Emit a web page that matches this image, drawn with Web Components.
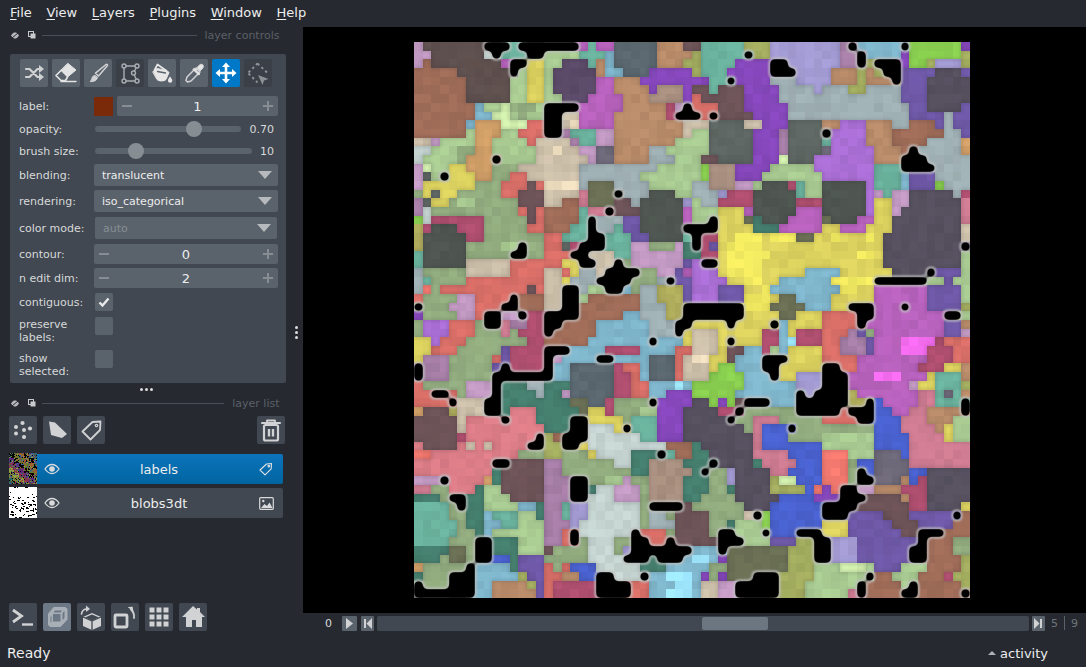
<!DOCTYPE html>
<html><head><meta charset="utf-8"><title>napari</title>
<style>html,body{margin:0;height:100%;background:#262930;overflow:hidden}</style></head>
<body><nv-app></nv-app>
<script>
const FONT='"DejaVu Sans",sans-serif';
const S=(b)=>`<svg width="28" height="28" viewBox="0 0 28 28" fill="none" stroke="#d1d2d4" stroke-width="2" stroke-linecap="round" stroke-linejoin="round">${b}</svg>`;
const ICONS={
shuffle:S(`<path d="M6 10h3.5l8 8H20M6 18h3.5l8-8H20" stroke-width="2.2"/><path d="M19 6l5 4-5 4zM19 14l5 4-5 4z" fill="#d1d2d4" stroke="none"/>`),
erase:S(`<path d="M16 4.500L24 11l-8.500 7L9 11.500z" fill="#e4e4e4" stroke="#e4e4e4" stroke-width="1"/><path d="M9 11.500L4 16.500 9 21.500h4.500l2-3.500" stroke="#e4e4e4" stroke-width="1.700"/><path d="M9 22.500h15" stroke="#e4e4e4" stroke-width="1.300"/>`),
brush:S(`<path d="M22 5.500c1-.7 2 .3 1.300 1.300L14.500 17l-3-2.800z" stroke-width="1.500"/><path d="M10.500 16.500c-2.500.5-2.500 3-3 4.500-.2.800-1 1.200-1.500 1.500 3 .5 7-.5 7.500-4z" fill="#d1d2d4" stroke-width="1"/>`),
poly:S(`<path d="M8 7h13l-3.500 7 3.500 8H8z" stroke="#a8adb2" stroke-width="1.400"/><g fill="#3f444c" stroke="#a8adb2" stroke-width="1.400"><circle cx="8" cy="7" r="2"/><circle cx="21" cy="7" r="2"/><circle cx="17.500" cy="14" r="2"/><circle cx="21" cy="22" r="2"/><circle cx="8" cy="22" r="2"/></g>`),
fill:S(`<path d="M5 12.500l4-3 10 2 2 2-3 7c-2 2-7 2-9 0z" fill="#e6e6e6" stroke="#e6e6e6" stroke-width="1"/><path d="M6.500 11L9.500 5.500l8.500 6" stroke="#e6e6e6" stroke-width="1.700"/><path d="M9.500 12.500l8 1.500" stroke="#5a626c" stroke-width="1.300"/><path d="M22 17.500c1.500 2 2.300 3 2.300 4a2.200 2.200 0 0 1-4.400 0c0-1 .7-2 2.100-4z" fill="#e6e6e6" stroke="none"/>`),
pick:S(`<path d="M16 9l4 4-9 9-3.500 1-1.500-1.500 1-3.500z" stroke-width="1.500"/><path d="M14.500 9.500l5.500 5.500-1.500 1L13 10.500zM17 8.500l2.500-2.500c1-1 3-1 3.500 0s.5 2.500-.5 3.500L20 12z" fill="#e4e4e4" stroke="#e4e4e4" stroke-width=".8"/>`),
move:S(`<path d="M14 6v16M6 14h16" stroke="#fff" stroke-width="2.600" stroke-linecap="butt"/><path d="M14 3.500l4 4.500h-8zM14 24.500l4-4.500h-8zM3.500 14L8 10v8zM24.500 14L20 10v8z" fill="#fff" stroke="none"/>`),
select:S(`<path d="M13.500 4.500L23 13.500M4.500 13.500l9-9M4.500 14.500l9 9" stroke="#8d9196" stroke-dasharray="2.500 2.800" stroke-width="1.900" stroke-linecap="butt"/><path d="M14 16l10.500 4-4.500 1.500-1.500 4.500z" fill="#8d9196" stroke="none"/>`),
points:S(`<g fill="#d1d2d4" stroke="none"><circle cx="13.500" cy="7" r="2.100"/><circle cx="7" cy="11" r="2"/><circle cx="21" cy="12.500" r="2.100"/><circle cx="15" cy="14" r="2"/><circle cx="7" cy="17.500" r="2"/><circle cx="15" cy="21" r="2.100"/></g>`),
shapes:S(`<path d="M6 5.500l6 1L24 18l-5 4-11-3z" fill="#d1d2d4" stroke="none"/>`),
labels:S(`<path d="M5.500 15.500L15.500 6l8-.5-.5 8.500-9.500 9.500z" stroke-width="1.800"/><circle cx="19.500" cy="9.500" r="1.200" stroke-width="1.200"/>`),
trash:S(`<path d="M5 7h18" stroke-width="2.200"/><path d="M10 6.500V4.500h8v2" stroke-width="1.800" stroke-linecap="butt"/><rect x="7" y="9" width="14" height="15.500" rx="1.500" stroke-width="2.200"/><path d="M12 13v7.500M16 13v7.500" stroke-width="2.400" stroke-linecap="butt"/>`),
term:S(`<path d="M4 7l8.500 6L4 19" stroke-width="2.800" stroke-linecap="butt" stroke-linejoin="miter"/><path d="M13 21.500h11" stroke-width="2.400" stroke-linecap="butt"/>`),
ndisp:S(`<path d="M11 4.500h11.500l1.500 1.500v10.500l-6.500 7H7l-1.500-1.500V11z" fill="#a9afb6" stroke="#a9afb6" stroke-width="1"/><path d="M10 11h7.500v7.500H10zM12 7.500h7l-1.500 2h-7zM19.500 10l2-2v7l-2 2zM8.500 12.500v6l-1 1.500v-6z" fill="#6c7885" stroke="none"/>`),
rollcube:S(`<path d="M15 10l9 4v9l-9 4-9-4v-9z" fill="#d1d2d4" stroke="none"/><path d="M6 14l9 4 9-4M15 18v9" stroke="#414851" stroke-width="1.300"/><path d="M15 11.500l7 3-7 3-7-3z" fill="#414851" stroke="none"/><path d="M4.500 11c.5-3 2.500-5 5.500-5" stroke-width="1.600"/><path d="M9 2.500l4 3.500-4 3z" fill="#d1d2d4" stroke="none"/>`),
transpose:S(`<rect x="4" y="12" width="12" height="12" rx="1" stroke-width="2.800"/><path d="M23 15c.5-3.500-.5-6-3-8.500" stroke-width="1.800"/><path d="M17 3.500l5 .5 0 5z" fill="#d1d2d4" stroke="none" transform="rotate(-8 20 6)"/>`),
grid:S(`<g fill="#d1d2d4" stroke="none"><rect x="4.500" y="4.500" width="5" height="5"/><rect x="11.500" y="4.500" width="5" height="5"/><rect x="18.500" y="4.500" width="5" height="5"/><rect x="4.500" y="11.500" width="5" height="5"/><rect x="11.500" y="11.500" width="5" height="5"/><rect x="18.500" y="11.500" width="5" height="5"/><rect x="4.500" y="18.500" width="5" height="5"/><rect x="11.500" y="18.500" width="5" height="5"/><rect x="18.500" y="18.500" width="5" height="5"/></g>`),
home:S(`<path d="M14 3L3 14h4v10h6v-7h4v7h6V14h3l-5-5V5h-3v1.500z" fill="#d1d2d4" stroke="none"/>`)
};
const EYE=`<svg width="16" height="12" viewBox="0 0 16 12" fill="none"><path d="M1 6c2-3 4.500-4.500 7-4.500S13 3 15 6c-2 3-4.500 4.500-7 4.500S3 9 1 6z" stroke="#d9dadb" stroke-width="1.300"/><circle cx="8" cy="6" r="2.800" fill="#d9dadb"/></svg>`;
const TAG=`<svg width="14" height="14" viewBox="0 0 14 14" fill="none" stroke="#e0e1e2" stroke-width="1.100" stroke-linejoin="round"><path d="M1 8L7.500 2l5-.5-.3 5.300L6 12.800z"/><circle cx="9.800" cy="4.200" r=".8"/></svg>`;
const IMG=`<svg width="15" height="13" viewBox="0 0 15 13" fill="none"><rect x=".7" y=".7" width="13.600" height="11.600" rx="1" stroke="#d9dadb" stroke-width="1.200"/><path d="M2 11l3.500-4 2.500 2 2.500-3.500 3 5.500z" fill="#d9dadb"/><circle cx="4.300" cy="4" r="1.200" fill="#d9dadb"/></svg>`;
function def(name,css,html,extra){customElements.define(name,class extends HTMLElement{constructor(){super();const r=this.attachShadow({mode:'open'});r.innerHTML=`<style>${css}</style>${typeof html==='function'?html(this):html}`;}connectedCallback(){if(extra&&!this._d){this._d=1;extra(this);}}});}

def('nv-btn',`:host{display:block;width:28px;height:28px;border-radius:2px;background:var(--bg,#414851);flex:none}:host([ctl]){background:#5a626c}:host([dim]){background:#3b4048}:host([active]){background:#0078c8}:host([on]){background:#6c7885}svg{display:block}`,'',h=>{h.shadowRoot.innerHTML+=ICONS[h.getAttribute('icon')]||'';});
def('nv-menu',`:host{display:flex;height:27px;align-items:center;padding:0 0 2px 10px;box-sizing:border-box;font:13px ${FONT};color:#eceded;background:#262930}span{margin-right:14.6px}u{text-underline-offset:2px}`,`<span><u>F</u>ile</span><span><u>V</u>iew</span><span><u>L</u>ayers</span><span><u>P</u>lugins</span><span><u>W</u>indow</span><span><u>H</u>elp</span>`);
def('nv-title',`:host{display:flex;align-items:center;height:16px;font:11px ${FONT};color:#5b6068;padding:0 10.500px 0 11px}i{flex:1;height:1px;background:#4a4f57;margin:0 8px 0 6px}svg{display:block;margin-right:9px}svg+svg{margin-right:0}`,
`<svg width="8" height="7" viewBox="0 0 8 7"><path d="M0 3.500C1.500 1 3 .5 4 .5s2.500.5 4 3C6.500 6 5 6.500 4 6.500S1.500 6 0 3.500z" fill="#b5b7ba"/><path d="M1 6L7 1" stroke="#262930"/></svg><svg width="8" height="8" viewBox="0 0 8 8" fill="none" stroke="#c8cacc"><rect x="2.500" y="2.500" width="5" height="5" fill="#c8cacc" stroke="none"/><rect x=".5" y=".5" width="5" height="5"/></svg><i></i><slot></slot>`);
def('nv-row',`:host{display:flex;align-items:center;height:var(--h,20px);font:11px/13px ${FONT};color:#d7d9da}.l{width:75px;flex:none}.c{flex:1;min-width:0;display:flex;align-items:center;gap:4px}:host([top]){align-items:flex-start}:host([top]) .l{margin-top:2px}`,`<div class="l"><slot name="label"></slot></div><div class="c"><slot></slot></div>`);
def('nv-stepper',`:host{display:flex;flex:1;align-items:center;height:20px;background:#5a626c;border-radius:2px;font:13px ${FONT};color:#eceded;justify-content:space-between;padding:0 5px}b{width:10px;height:10px;position:relative;display:block}b:before{content:"";position:absolute;left:0;right:0;top:4px;height:2px;background:#868e93}b.p:after{content:"";position:absolute;top:0;bottom:0;left:4px;width:2px;background:#868e93}`,`<b></b><slot></slot><b class="p"></b>`);
def('nv-slider',`:host{display:flex;flex:1;align-items:center;font:11px ${FONT};color:#d7d9da}.t{position:relative;flex:1;height:6px;margin-left:1px;background:#5a626c;border-radius:3px}.t i{position:absolute;top:-5px;width:16px;height:16px;margin-left:-8px;border-radius:50%;background:#868e93}.v{flex:none;text-align:right;padding-right:4px;box-sizing:border-box}`,h=>`<div class="t"><i style="left:${h.getAttribute('pos')}%"></i></div><div class="v" style="width:${h.getAttribute('vw')}px"><slot></slot></div>`);
def('nv-combo',`:host{display:flex;flex:1;align-items:center;height:22px;background:#5a626c;border-radius:2px;font:11px ${FONT};color:#eceded;padding:0 6px 0 8px;justify-content:space-between}:host([off]){margin:0 1px;color:#868e93}i{border-left:7px solid transparent;border-right:7px solid transparent;border-top:8px solid #b7babc}`,`<slot></slot><i></i>`);
def('nv-check',`:host{display:block;width:18px;height:18px;margin-left:1px;background:#5a626c;border-radius:2px}svg{display:block}`,h=>h.hasAttribute('checked')?`<svg width="18" height="18" viewBox="0 0 18 18" fill="none"><path d="M4.500 9.500l3 3 6-7" stroke="#e8e9ea" stroke-width="2.400"/></svg>`:'');
def('nv-controls',`:host{display:flex;flex-direction:column;margin:11px 4px 0 10px;background:#414851;border-radius:2px;padding:5px 8px 5px 9px;height:329px;box-sizing:border-box}.b{display:flex;gap:4px;margin-left:1px}nv-row{flex:none}.sw{width:19px;height:19px;background:#7a2a08;flex:none}`,
`<div class="b"><nv-btn ctl icon="shuffle"></nv-btn><nv-btn ctl icon="erase"></nv-btn><nv-btn ctl icon="brush"></nv-btn><nv-btn dim icon="poly"></nv-btn><nv-btn ctl icon="fill"></nv-btn><nv-btn ctl icon="pick"></nv-btn><nv-btn active icon="move"></nv-btn><nv-btn dim icon="select"></nv-btn></div>
<nv-row style="margin-top:9px"><span slot="label">label:</span><div class="sw"></div><nv-stepper>1</nv-stepper></nv-row>
<nv-row style="margin-top:3px"><span slot="label">opacity:</span><nv-slider pos="67.800" vw="37">0.70</nv-slider></nv-row>
<nv-row style="margin-top:2px"><span slot="label">brush size:</span><nv-slider pos="26" vw="26">10</nv-slider></nv-row>
<nv-row style="margin-top:3px;--h:22px"><span slot="label">blending:</span><nv-combo>translucent</nv-combo></nv-row>
<nv-row style="margin-top:4px;--h:22px"><span slot="label">rendering:</span><nv-combo>iso_categorical</nv-combo></nv-row>
<nv-row style="margin-top:5px;--h:22px"><span slot="label">color mode:</span><nv-combo off>auto</nv-combo></nv-row>
<nv-row style="margin-top:5px"><span slot="label">contour:</span><nv-stepper>0</nv-stepper></nv-row>
<nv-row style="margin-top:4px"><span slot="label">n edit dim:</span><nv-stepper>2</nv-stepper></nv-row>
<nv-row style="margin-top:4px"><span slot="label">contiguous:</span><nv-check checked></nv-check></nv-row>
<nv-row top style="margin-top:5px;--h:28px"><span slot="label" style="position:relative;top:-1px">preserve<br>labels:</span><nv-check></nv-check></nv-row>
<nv-row top style="margin-top:5px;--h:28px"><span slot="label">show<br>selected:</span><nv-check></nv-check></nv-row>`);
def('nv-layer',`:host{display:flex;align-items:center;height:30px;margin:0 7px 0 9px;background:#414851;border-radius:2px;font:13px ${FONT};color:#eceded;position:relative}:host([sel]){background:linear-gradient(#0d74bd,#00659f)}canvas{display:block;flex:none;width:28px;height:31px;margin-bottom:1px}.e{width:30px;text-align:center;flex:none;line-height:0}.n{flex:1;text-align:center;padding-right:8px}.t{width:16px;flex:none;margin-right:8px;line-height:0}`,h=>`<canvas width="28" height="31"></canvas><div class="e">${EYE}</div><div class="n"><slot></slot></div><div class="t">${h.hasAttribute('sel')?TAG:IMG}</div>`,h=>{
 const c=h.shadowRoot.querySelector('canvas').getContext('2d');let s=7;const rnd=()=>(s=(s*16807)%2147483647)/2147483647;
 if(h.hasAttribute('sel')){const p=['#000','#000','#7a8a3a','#5b2a7a','#a0602a','#2a6a5a','#8a3050','#6a7a30','#3a5a9a','#90a040'];
  for(let y=0;y<31;y++)for(let x=0;x<28;x++){const b=(Math.floor(x/5)*7+Math.floor(y/5)*13)%10;c.fillStyle=rnd()<.55?p[b]:p[Math.floor(rnd()*10)];c.fillRect(x,y,1,1);}}
 else{c.fillStyle='#fff';c.fillRect(0,0,28,31);c.fillStyle='#000';for(let i=0;i<120;i++){const y=rnd()*31;if(y<10&&rnd()<.7)continue;c.fillRect(Math.floor(rnd()*28),Math.floor(y),1+Math.floor(rnd()*2),1);}}
});
def('nv-layers',`:host{display:flex;flex-direction:column}.b{display:flex;gap:6px;margin:5px 5px 10px 9px}.s{flex:1}`,`<div class="b"><nv-btn icon="points"></nv-btn><nv-btn icon="shapes"></nv-btn><nv-btn icon="labels"></nv-btn><div class="s"></div><nv-btn icon="trash"></nv-btn></div><nv-layer sel>labels</nv-layer><nv-layer style="margin-top:4px">blobs3dt</nv-layer>`);
def('nv-side',`:host{display:flex;min-height:0;background:#262930}.col{width:290px;display:flex;flex-direction:column}.v{flex:1;display:flex;flex-direction:column;align-items:center;justify-content:center;gap:2px;margin-right:1px}.v i,.h i{width:3px;height:3px;border-radius:50%;background:#dcdddd;display:block}.h{display:flex;justify-content:center;gap:2px;align-items:center;height:12px;margin-left:3px}.f{margin-top:auto;display:flex;gap:6px;padding:0 0 6px 9px}`,
`<div class="col"><nv-title>layer controls</nv-title><nv-controls></nv-controls><div class="h"><i></i><i></i><i></i></div><nv-title>layer list</nv-title><nv-layers></nv-layers><div class="f"><nv-btn icon="term"></nv-btn><nv-btn on icon="ndisp"></nv-btn><nv-btn icon="rollcube"></nv-btn><nv-btn icon="transpose"></nv-btn><nv-btn icon="grid"></nv-btn><nv-btn icon="home"></nv-btn></div></div><div class="v"><i></i><i></i><i></i></div>`);
const PAL={K:'#000000',D:'#5e504e',B:'#a06d59',T:'#6bb39e',t:'#46806f',G:'#a9cb92',g:'#92ac7f',h:'#d5f3b0',Y:'#dcd25f',y:'#f2ea60',P:'#5b4a68',M:'#b862bd',m:'#f56cf0',O:'#b98c6a',o:'#d2a068',V:'#8748bd',v:'#ab6fd6',W:'#cdc0aa',w:'#efdfc0',R:'#d96f68',r:'#f47a70',N:'#4f5651',n:'#5d6662',A:'#9fb0b4',a:'#5b6870',C:'#7fb6cc',c:'#9fe8ff',E:'#c59cc6',e:'#a77fa7',L:'#a39bd3',l:'#6f59a8',U:'#4a62d0',S:'#b04f70',s:'#cf7c92',p:'#dc7d87',Q:'#56505f',F:'#8ad050',f:'#b0ad5c',i:'#c5d4d0',I:'#6b7055',J:'#a4ae60',d:'#6d5458',X:'#a88f7f',z:'#6f6a7a'};
const GL=["EDDDDDDDKKKTKKKKKKKMTMMaaaaaOOOd","EEDDDDDDiKTTTKKGGGGTTTCaaaaaOOOO","EBDDDDDDDDMKKYYGGPPPTOCaaaaaOOOJ","BBBBBDDDDDDKGYYGPPPPPOCCaaaVVVVV","BBBBBBDDDDDGGYYGPPPPPMMOOOVVVVVV","BBBBBBDDDDDGGYYGPPPPPMMOOOOVXXXV","BBBBBBDDDDDGGYYGGPPPMMMMOOOXXXXV","BBBBBBBCGGhgggGKKKKMMMMMOOOOOSEK","BBBBBBBCChhGgGGKKWWMMMMOOOOOOSKK","BBBBBBCooohhhRRKKWwMMMMOOOOOOOOW","BBBBBBGoooGGRRRKKeTTTEEOOOOOOOOW","WWEGGGGooGGGGRWWWWeTTEEOOOOOOOGG","iiGGGggooGGGGGWWwWWEEzzOOOOAAGGG","iGGGGgoooKGGGGWWWWWWEzzOOOOAAAGG","EhGGYYooogggWWWWWWWAAAAAAAAAGGGG","EnGKYYYooggRRWWWWWWAAAAAAAGGGGGG","EYYYYYYgggRRRdRwwwwAIIIAAAAGGGGG","gYnYYgggggRRdddWWWWsIIIKAAANNNGG","enYYgGGgggggdddWWBBsIIIddANNNNNL","eiggggggggggRdRBBBBTssKdddNNNNNM","FiSSSSSSgggggdRBBBBTKAAAllNNNNNM","fSNNNSSSgggggRRBBBTTKAATllNNNNNK","fNNNNNSSgggggggRRTTTKKTTTllNNNNT","fNNNNNggggGGKggRRnSKKKTTTEEgggEt","TNNNNNgggggKKggRRRKKWWWTTEEEEEEt","TNNNNNWWWWWRRRRRRYYKKWWKgEEEEEEl","AgggggWWWWWRRRRWWRYAAWKKKKggEElM","ATggggRRRRRRRRRWWYAAAKKKKgggAKll","ArgRRRRRRRRRRdRWWKKAGGKKCgAAfffl","RggggEERRRRKBBBWWKKGBBBBBBAAfffl","KgggEEERRRKKBBBWWKKBBBBBBBAAAffK","VggggEERKKEEKSSKKKKBBBBBCCAAAffK",
"gvvvRRRgKKseeSSKKBBBBCCCCCCAAAKK","gvvvRRRgggsgSSSKBBBBBCCCCCCAAAKY","YYvRRRgggggggSSBBBBBCCCCCCCKCCCY","YYRRRggggglSSSSKKKCCCCSSSSCCCCRR","YeeegggggRlSSSSKECCCCKKCCCCaaaRW","KeeegggggllKSSSSKCCaaaaaSRRCaaaRW".replace('ll','l'),"KeeegggggKKKKKKKCCaaaaaSSRCaaaRW","RgggggEEEKtttAAtttaaaaaSSRRCCCcC","RRKKRgEEEKttttAttEaaaaaSSRRCCVVV","RRRRKWWWKKttttttttIIaaSggggKVVVV","odddfWWWKKtppptttttIYYSgggGGVVVQ","dddddWppppKpppttttKKYYYYgTTTVVVQ","dddddWppppppppptttKKiiiYKTTTVVVQ","dddddSppppppppKJBKKKiiiiiiTTVVVQ","pddddpWpWppppKKJJKKYiiiiiiiiiBBB","rrppppppppppgggJJgggYiiiitttKTBB","pppppppppKKddddeeggggggiittXXXXt","ppppppppptdddddeeggggggggttXXXXX","EEEKppppotdddddeeeKKggGGEggXXXXt","ssggppptGGdddddeeeKKtiiEEEgXXXXt","tttgKKttGGGddddeeeKKiiiEEEgXXXXt","TTTTgKttGGGGCCteeTLLiiiiiigKKKKd","TTTTggttCTTTGGteeTLLiiiiiigAAgdd","TTTTTgttCCTTGGGeeeLiiiiiiigAAAdd","TTTTTggtCGGGGGGeeRKiiiiiiKRRRgdd","TTTTgggKKtttGGGeeRKgiiiggKKRRKdd","ttttIIgKKtttGGGdggggiiigLKKKKKKK","tttgIIgKKUUtlllgggggiiiiKKKtKKKC","ogggggKCCCCtlllRgRUUUiiiiitttCCC","tgggKKKCCCCCJllRROOUUKKiiiKCCccc","KgggKKKCCOOOOJlRSSSSSKKKKRRCCCcc","KKKKKKKCCOOOOOlRSSSSSKKKKRRCCccc"];
const GR=["dTTTTTJJJLLLLLLLLeKCCCCCKFFFFFFV","JTTTTTKJJLLLLLLLLeeKCCCCVFFFFFFJ","JTTTTVVVVKKLLLLLLeeKJKKKVFFJLLLJ","JTTTVVVVVKKKLLLLOOOJOJKKllllQQQl","VVTTKVVVVAAALLLLOOOJOOOKlllQQQQQ","ddTdddVVVVAAAALAAAJJAAAAlllQQQQQ","RdddddVVVVAAAAAAAAAAAAAAlllQQQQQ","RRRdddVVVVVAAAAAAAAAAAAAAllQQQQl","KRKddddVVVVAAAAAAAAAAAAAAllllAll","WWnnnnWWVVVnnnnOOvvvOOOAABBBlAll","GGnnnnnVVVennnnKvvvvOOOBBBBBBAAl","GGnnnnnVVVennnnTvvvvOOOBBBBAAAAo","GGnnnnnVVVennnnzvvvvvOOOBKAAAAAo","GddnnnnVVVhnnnvvvvvvvOOOKKKAAAAA","GFXXXVVVVGGGGGvvvvvvvTTTKKKKAAAA","GFXXXVVVGGGGGGGvvvvvvTTTClllAAAA","AAXXXEEGNNNSTGGNNNNNvTTTClllFAAA","AAALSSSNNNNNTGGNNNNNvETEEQQQQQAS","GAASSSSNNNNNSSSNNNNNvYYEEQQQQQQs","GGGYYYMNNNNNMMMNNNNNvYYEQQQQQQQs","GGKYYYItNNNMMMMINNNMMYYQQQQQQQQs","KKKYYYYtttMMMMMYYMMMYYYQQQQQQQQW","KSSYYyyyYyyyIIYYyYYYyYQQQQQQQQQW","KSlYyyyyYYYYYYYYYYYYYYQQQQQQQQQK","tSSYyyyyyYYYYYYYYYYyyYQQQQQQQQQG","vKKYyyyyYYYYYYYYYYYYYYQQQQQQQQQG","vvvYyyyyYYYYYCCCCYYYYYYQQQQKlllG","vvvvYYyyYYCCCCCCyyyyyKKKKKKGGlGG","vvvlllYYyCCCCCCCCyyYYMMMMMMllllG","vvvlllyyyYIICCCCYYYYYMMMMMMllllG","KKKKKKyyyIIIICCCYYKKKMMMKMMllllJ","KKKKKKYYYYIIYYYRRRRKKMMMMMMMMKKG",
"YYYYKYYYYKCYYYYRRRRKMMMMMMMMMllO","WWWYYYYYSSCYSSSRRRelgMMMMMMMMllE","WWWYKYYYSSCcSSSRReeelMMMmmmmSRRR","WWWYddCCSGCYYYYRReeelMMMmmmSSSRR","wwYYdCCCKKKYYYYRRRRMMMMMMMMSSSRR","WWYFFCCCKKYYYYYKKRRMMMMMMMSSSYYO","WWFFFFCCCKYYLLLKKKMMMmmmMMMYTTTO","FFFFFFCCCCCCLLLKKKMMMMMMMEYYTTTJ","FFFFFCCCCCCCKLKKKKfMMMMMMMssTzTO","QQFVFdKKKCCCKKKKKKffKUMMMMssTTTK","QQQSSKggggggKKKKKRKKKUUMMssOOOOK","QQQQKggsssgggggRRRRKKUUUsssOOOGG","QQQQQQgsUUUKgggggggggUUUssssOYGG","QQQQQQQsUUUggggGGGGGGUUUUssssYGG","tQQQQQQsUUUUUUUGGGGGGUUUUsssssss","ttQQQQQssssUUUUrrrGGGzzzUsssssss","ttKQQQQtssssUUUrrrgUUzzzzsssssss","tKggLQQQQssUUUUrrrgKUzzzzUUQQQQQ","ttggLQQQQJhhUUUrrrgKKzzzOUSQQQQQ","ttggtQQQQJJJJUrVrKKEEOOOSSSQQQQQ","tggggQQQQQUUUUVVVKKKddddOSSQQQQQ","ggggggQQQUUUUUUKKKKddddddSSQQQQY","ddggggWKFUUUUUUKKKlllldddlllllKB","ddggtGGGFUUUUUUYYYllllldddllllBB","ddgKKGGGKUUUKKKYYYllllllddKKKBBB","dddKKKGGGlllJJKKLLLlllllllKBBBgg","CCCKIIIIIIIJJJKKLLLllllllKKBBBgg","ccCVIIIIIIIJJJKKLLLllllllKKBBBBJ","CCggIIIIIIIJJJGGGhhhGlllGGGBBBBJ","CVgVIIIKKKJJJJGGGGGGKBBGGGBBBSJJ","CWWEEKKKKKJJJGGGGGGKBBBBGKBBBBBJ","CWWEEKKKKKJJJGGGGGsKBBBBKKBBBBBK"];
def('nv-image',`:host{display:block;width:556px;height:556px;flex:none}canvas{display:block}`,`<canvas width="556" height="556"></canvas>`,h=>{
 const ctx=h.shadowRoot.querySelector('canvas').getContext('2d',{willReadFrequently:true});
 const off=document.createElement('canvas');off.width=off.height=64;const o=off.getContext('2d');
 const mk=document.createElement('canvas');mk.width=mk.height=64;const m=mk.getContext('2d');
 const hx=c=>[1,3,5].map(i=>parseInt(c.substr(i,2),16));
 const cell=(x,y)=>{const r=x<32?GL[y]:GR[y];return (r||'').padEnd(32,'K')[x<32?x:x-32];};
 for(let y=0;y<64;y++)for(let x=0;x<64;x++){const ch=cell(x,y);if(ch==='K'){m.fillStyle='#000';m.fillRect(x,y,1,1);
   let nb='K';for(const [a,b] of [[x-1,y],[x+1,y],[x,y-1],[x,y+1]]){if(a>=0&&a<64&&b>=0&&b<64){const q=cell(a,b);if(q!=='K'){nb=q;break;}}}
   o.fillStyle=nb==='K'?'#000':PAL[nb];o.fillRect(x,y,1,1);continue;}
   const col=hx(PAL[ch]||'#000000');const h0=Math.sin(x*12.9898+y*78.233)*43758.5453;const j=1+((h0-Math.floor(h0))-.5)*.08;
   o.fillStyle=`rgb(${col.map(v=>Math.min(255,Math.round(v*j))).join(',')})`;o.fillRect(x,y,1,1);}
 ctx.imageSmoothingEnabled=false;ctx.filter='blur(.5px)';ctx.drawImage(off,0,0,556,556);
 /* soft shading where two blobs meet */
 ctx.filter='blur(1.5px)';ctx.strokeStyle='rgba(30,25,35,.16)';ctx.lineWidth=2.5;ctx.beginPath();const u=556/64;
 for(let y=0;y<64;y++)for(let x=0;x<64;x++){const a=cell(x,y);if(a==='K')continue;
  if(x<63){const b=cell(x+1,y);if(b!=='K'&&b!==a&&b.toLowerCase()!==a.toLowerCase()){ctx.moveTo((x+1)*u,y*u);ctx.lineTo((x+1)*u,(y+1)*u);}}
  if(y<63){const b=cell(x,y+1);if(b!=='K'&&b!==a&&b.toLowerCase()!==a.toLowerCase()){ctx.moveTo(x*u,(y+1)*u);ctx.lineTo((x+1)*u,(y+1)*u);}}}
 ctx.stroke();ctx.filter='none';
 const base=ctx.getImageData(0,0,556,556);
 const t=document.createElement('canvas');t.width=t.height=556;const tc=t.getContext('2d',{willReadFrequently:true});tc.imageSmoothingEnabled=false;tc.filter='blur(2.4px)';tc.drawImage(mk,0,0,556,556);
 const ma=tc.getImageData(0,0,556,556).data,d=base.data;
 const ss=(a,b,v)=>{const k=Math.max(0,Math.min(1,(v-a)/(b-a)));return k*k*(3-2*k);};
 for(let i=0;i<d.length;i+=4){const a=ma[i+3]/255;if(a<.02)continue;const bl=ss(.42,.64,a),ha=ss(.06,.36,a)*.6;
  for(let c=0;c<3;c++){const v=d[i+c]*(1-ha)+190*ha;d[i+c]=v*(1-bl);}}
 ctx.putImageData(base,0,0);
});
def('nv-viewer',`:host{display:flex;background:#000;height:586px;padding:15px 0 0 111px;box-sizing:border-box}`,`<nv-image></nv-image>`);
def('nv-dims',`:host{display:flex;align-items:center;height:24px;padding:0 8px 4px 0;box-sizing:border-box;font:11px ${FONT};color:#d7d9da;gap:3px}.z{width:36px;padding-left:22px;box-sizing:border-box}.b{width:15px;height:15px;flex:none;background:#5a626c;border-radius:1px;line-height:0}.b.n{width:13px}.b.l{margin-left:1px}.t{flex:1;height:15px;background:#414851;border-radius:2px;display:flex;padding:1px 261px 0 325px;box-sizing:border-box}.t i{flex:1;height:13px;background:#6b7681;border-radius:2px}.m{color:#6f757a;font-size:11px;margin-left:3px}.d{width:1px;height:14px;background:#5a626c;margin:0 3px 0 3px}`,
`<div class="z">0</div><div class="b"><svg width="15" height="15"><path d="M4 2l7 5.500-7 5.500z" fill="#d1d2d4"/></svg></div><div class="b n l"><svg width="13" height="15"><path d="M3 3h2v9H3zM11 2v11L5.500 7.500z" fill="#d1d2d4"/></svg></div><div class="t"><i></i></div><div class="b n"><svg width="13" height="15"><path d="M10 3h-2v9h2zM2 2v11l5.500-5.500z" fill="#d1d2d4"/></svg></div><span class="m">5</span><div class="d"></div><span class="m" style="margin-left:0">9</span>`);
def('nv-status',`:host{display:flex;align-items:center;justify-content:space-between;height:30px;font:14px ${FONT};color:#eceded;padding:2px 38px 0 7px;box-sizing:border-box}.a{display:flex;align-items:center;font-size:13px;gap:4px}.a i{border-left:4px solid transparent;border-right:4px solid transparent;border-bottom:4px solid #b0b3b6}`,`<span>Ready</span><span class="a"><i></i>activity</span>`);
def('nv-app',`:host{display:grid;grid-template-columns:303px 1fr;grid-template-rows:27px 610px 30px;width:1086px;height:667px;background:#262930}nv-menu,nv-status{grid-column:1/3}nv-side{min-height:0}.r{display:flex;flex-direction:column}`,`<nv-menu></nv-menu><nv-side></nv-side><div class="r"><nv-viewer></nv-viewer><nv-dims></nv-dims></div><nv-status></nv-status>`);
</script></body></html>
